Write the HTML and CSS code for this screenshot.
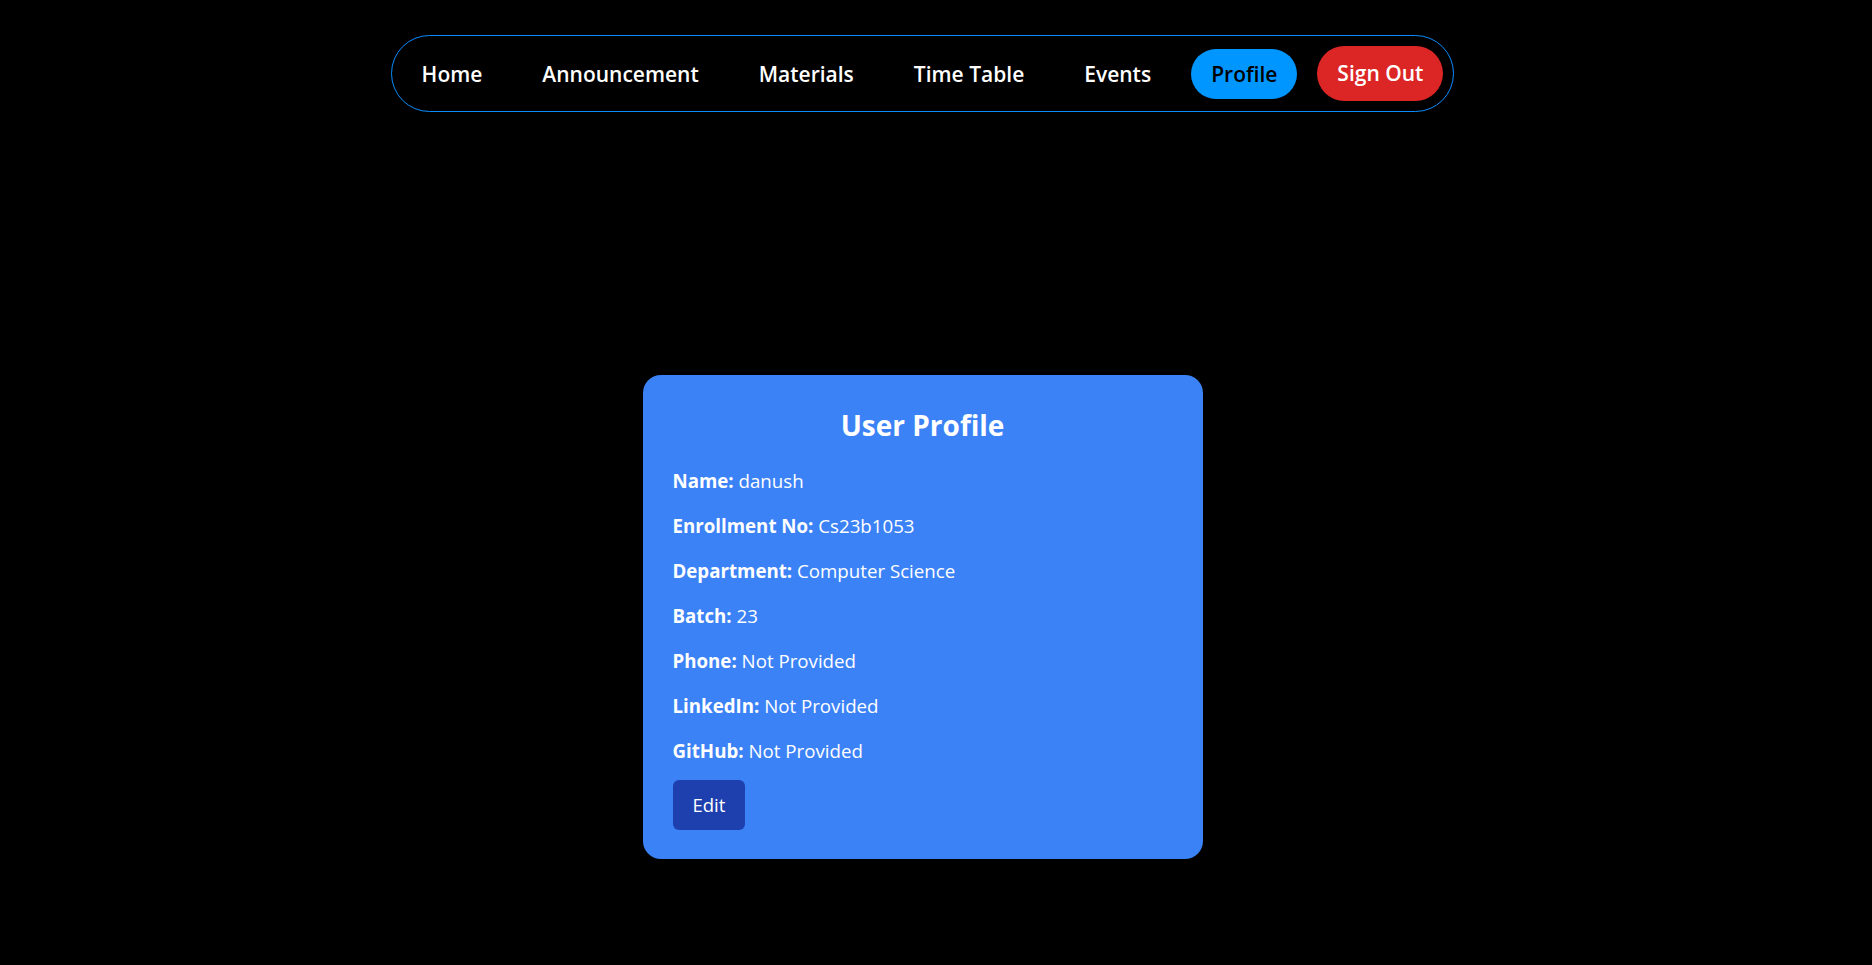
FILE: index.html
```html
<!DOCTYPE html>
<html lang="en">
<head>
<meta charset="utf-8">
<title>User Profile</title>
<link rel="stylesheet" href="styles.css">
</head>
<body>
<div class="page">
  <header class="nav-wrap">
    <nav class="navbar">
      <a class="nav-link" href="#">Home</a>
      <a class="nav-link" href="#">Announcement</a>
      <a class="nav-link" href="#">Materials</a>
      <a class="nav-link" href="#">Time Table</a>
      <a class="nav-link" href="#">Events</a>
      <a class="nav-link nav-active" href="#">Profile</a>
      <button class="signout" type="button">Sign Out</button>
    </nav>
  </header>
  <main class="main">
    <section class="card">
      <h2 class="card-title">User Profile</h2>
      <p class="row"><strong>Name:</strong> danush</p>
      <p class="row"><strong>Enrollment No:</strong> Cs23b1053</p>
      <p class="row"><strong>Department:</strong> Computer Science</p>
      <p class="row"><strong>Batch:</strong> 23</p>
      <p class="row"><strong>Phone:</strong> Not Provided</p>
      <p class="row"><strong>LinkedIn:</strong> Not Provided</p>
      <p class="row row-last"><strong>GitHub:</strong> Not Provided</p>
      <button class="edit-btn" type="button">Edit</button>
    </section>
  </main>
</div>
</body>
</html>
```

FILE: styles.css
```css
* { box-sizing: border-box; }

html, body {
  margin: 0;
  padding: 0;
  background: #000;
}

body {
  font-family: "Open Sans", "Noto Sans", sans-serif;
  color: #fff;
  min-height: 965px;
}

.page {
  padding: 35px 27px 0 0;
}

.nav-wrap {
  display: flex;
  justify-content: center;
}

.navbar {
  display: flex;
  align-items: center;
  gap: 20px;
  padding: 10px;
  border: 1px solid #0a8cff;
  border-radius: 999px;
}

.nav-link {
  color: #fff;
  text-decoration: none;
  font-size: 21px;
  font-weight: 600;
  line-height: 28px;
  padding: 0 20px;
  white-space: nowrap;
}

.nav-active {
  background: #0096ff;
  color: #000;
  border-radius: 999px;
  padding: 11px 20px;
}

.signout {
  font-family: inherit;
  background: #dc2626;
  color: #fff;
  border: none;
  border-radius: 999px;
  font-size: 21px;
  font-weight: 600;
  line-height: 28px;
  padding: 13px 20px 14px;
  white-space: nowrap;
  cursor: pointer;
}

.main {
  display: flex;
  justify-content: center;
  padding-top: 263px;
}

.card {
  width: 560px;
  background: #3b82f6;
  border-radius: 18px;
  padding: 30px 30px 29px;
}

.card-title {
  margin: 0 0 22px;
  text-align: center;
  font-size: 28px;
  font-weight: 700;
  line-height: 40px;
}

.row {
  margin: 0 0 17px;
  font-size: 18.7px;
  line-height: 28px;
}

.row-last {
  margin-bottom: 15px;
}

.row strong {
  font-weight: 700;
}

.edit-btn {
  font-family: inherit;
  background: #1e40af;
  color: #fff;
  border: none;
  border-radius: 6px;
  font-size: 18.5px;
  line-height: 28px;
  padding: 11px 20px;
  cursor: pointer;
}
```
